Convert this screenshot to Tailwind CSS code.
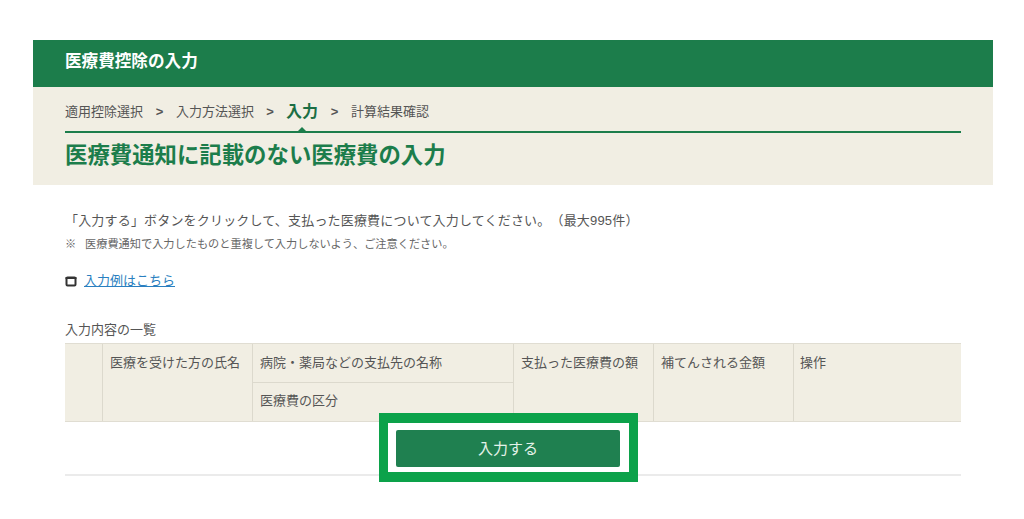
<!DOCTYPE html>
<html lang="ja">
<head>
  <meta charset="UTF-8" />
  <title>医療費控除の入力</title>
  <script src="https://cdn.jsdelivr.net/npm/@tailwindcss/browser@4"></script>
</head>
<body class="bg-white text-[13px] leading-[18px] text-[#555] font-['Liberation_Sans','Noto_Sans_CJK_JP',sans-serif]">
  <div class="w-[960px] ml-[33px] pt-[40px] h-[519px] overflow-hidden">

    <!-- header -->
    <div class="h-[47px] bg-[#1c7d4b] pl-[32px] pb-[4px] flex items-center text-white font-bold text-[16.6px]">医療費控除の入力</div>

    <div class="h-[98px] bg-[#f1eee3] px-[32px]">
      <div class="h-[46px] pt-[5px] flex items-center relative border-b-2 border-[#1c7d4b]">
        <span>適用控除選択</span>
        <span class="w-[33px] text-center text-[#555] font-bold">&gt;</span>
        <span>入力方法選択</span>
        <span class="w-[32px] text-center text-[#555] font-bold">&gt;</span>
        <span class="text-[16px] font-bold text-[#1c6e44]">入力</span>
        <span class="w-[33px] text-center text-[#555] font-bold">&gt;</span>
        <span>計算結果確認</span>
        <div class="absolute left-[233px] bottom-0 w-0 h-0 border-x-[4px] border-x-transparent border-b-[4px] border-b-[#1c7d4b]"></div>
      </div>
      <h1 class="mt-[8px] text-[22.4px] leading-[30px] font-bold text-[#1c7d4b]">医療費通知に記載のない医療費の入力</h1>
    </div>

    <!-- body -->
    <div class="px-[32px]">
      <p class="mt-[27px] tracking-[0.18px] [text-spacing-trim:space-all]">「入力する」ボタンをクリックして、支払った医療費について入力してください。（最大995件）</p>
      <p class="mt-[6px] text-[11.2px] leading-[16px] text-[#666] flex"><span class="w-[20px]">※</span><span>医療費通知で入力したものと重複して入力しないよう、ご注意ください。</span></p>

      <div class="mt-[20px] flex items-center h-[18px]">
        <svg class="w-[12px] h-[12px] mr-[7px]" viewBox="0 0 12 12">
          <rect x="1.5" y="2.5" width="9" height="8" rx="1" fill="none" stroke="#333" stroke-width="2" />
          <rect x="0.5" y="2" width="11" height="2" fill="#333" />
        </svg>
        <a class="text-[#2a7fc0] underline">入力例はこちら</a>
      </div>

      <p class="mt-[31px]">入力内容の一覧</p>

      <!-- list table -->
      <div class="mt-[4px] grid grid-cols-[38px_150px_261px_140px_140px_167px] grid-rows-[39px_38px] bg-[#f1eee3] border-y border-[#e0ddd2]">
        <div class="row-span-2 border-r border-[#dcd9cd]"></div>
        <div class="row-span-2 border-r border-[#dcd9cd] pl-[7px] pt-[10px]">医療を受けた方の氏名</div>
        <div class="border-r border-b border-[#dcd9cd] pl-[7px] pt-[10px]">病院・薬局などの支払先の名称</div>
        <div class="row-span-2 border-r border-[#dcd9cd] pl-[7px] pt-[10px]">支払った医療費の額</div>
        <div class="row-span-2 border-r border-[#dcd9cd] pl-[7px] pt-[10px]">補てんされる金額</div>
        <div class="row-span-2 pl-[6px] pt-[10px]">操作</div>
        <div class="border-r border-[#dcd9cd] pl-[7px] pt-[9px]">医療費の区分</div>
      </div>

      <!-- button with highlight frame -->
      <div class="relative -mt-[9px] flex justify-center pr-[9px]">
        <div class="border-x-[9px] border-y-[10px] border-[#0ca24a] bg-white pl-[8px] pr-[9px] pt-[7px] pb-[5px]">
          <button class="block w-[224px] h-[37px] bg-[#1f8050] rounded-[2px] text-[#e4f2e9] text-[15px]">入力する</button>
        </div>
      </div>
      <div class="-mt-[8px] border-t-2 border-[#ebebeb]"></div>
    </div>
  </div>
</body>
</html>
